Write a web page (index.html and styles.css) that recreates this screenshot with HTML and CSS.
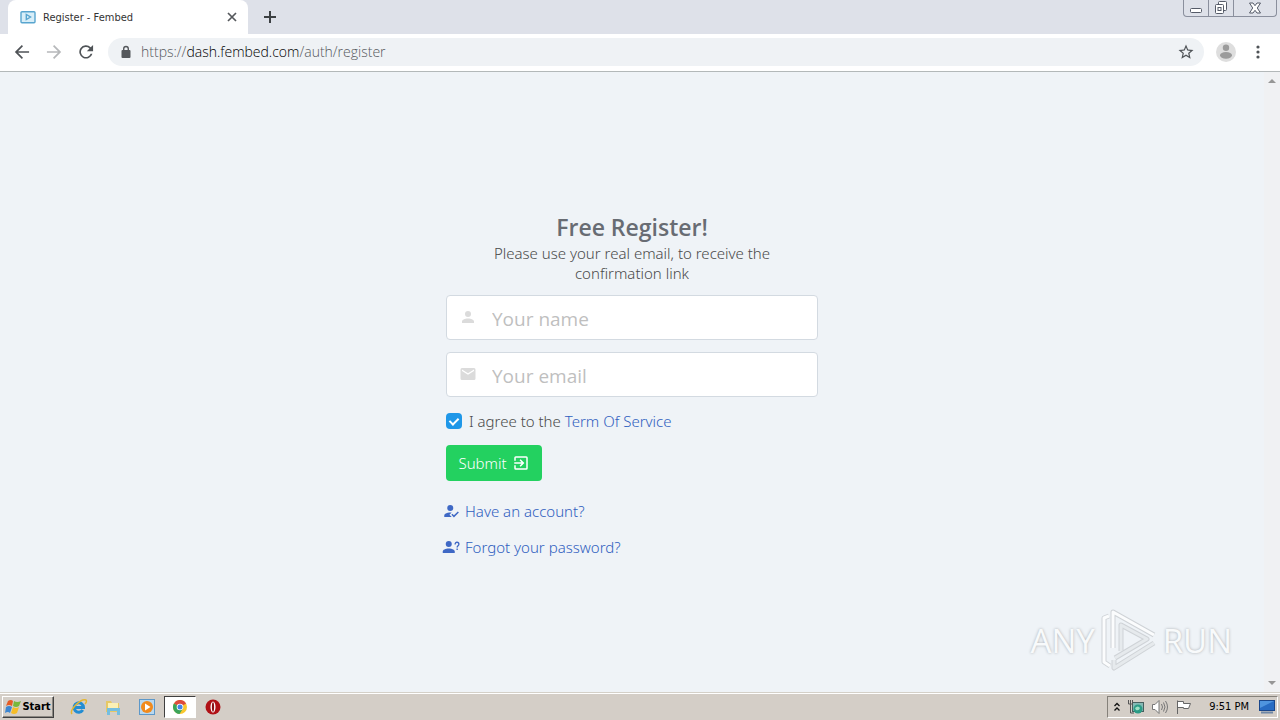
FILE: index.html
```html
<!DOCTYPE html>
<html lang="en">
<head>
    <meta charset="UTF-8">
    <meta name="viewport" content="width=device-width, initial-scale=1.0">
    <title>Register - Fembed</title>
    <link rel="stylesheet" href="styles.css">
</head>
<body>

    <header class="browser">
        <div class="tab-strip">
            <div class="tab">
                <svg class="favicon" width="16" height="16" viewBox="0 0 16 16" fill="#d8eef8" stroke="#58a5cf" stroke-width="1.4">
                    <rect x="1" y="2.7" width="14" height="11" rx="1"/>
                    <path d="M6.3 5.5v5L10.5 8z"/>
                </svg>
                <span class="tab-title">Register - Fembed</span>
                <button type="button" class="tab-close" aria-label="Close tab">
                    <svg width="10" height="10" viewBox="0 0 10 10" stroke="#55585c" stroke-width="1.7"><path d="M1 1l8 8M9 1l-8 8"/></svg>
                </button>
            </div>
            <button type="button" class="new-tab" aria-label="New tab">
                <svg width="12" height="12" viewBox="0 0 12 12" stroke="#3c4043" stroke-width="2"><path d="M6 0v12M0 6h12"/></svg>
            </button>
            <div class="window-buttons">
                <button type="button" class="win-min" aria-label="Minimize">
                    <svg width="14" height="14" viewBox="0 0 14 14" fill="#fff" stroke="#555b68"><rect x="1.5" y="7.5" width="11" height="4" rx="1"/></svg>
                </button>
                <button type="button" class="win-max" aria-label="Restore">
                    <svg width="14" height="14" viewBox="0 0 14 14" fill="#fff" stroke="#555b68"><rect x="4.500" y=".5" width="8" height="9" rx="1"/><rect x="1.500" y="3.500" width="8" height="9" rx="1"/><rect x="4" y="6.500" width="3" height="3"/></svg>
                </button>
                <button type="button" class="win-close" aria-label="Close">
                    <svg width="14" height="12" viewBox="0 0 14 12" fill="#fff" stroke="#555b68"><path d="M1.500 1h3.500l2 2.700L9 1h3.500L9.300 6l3.200 5H9L7 8.300 5 11H1.500l3.200-5z"/></svg>
                </button>
            </div>
        </div>
        <div class="toolbar">
            <button type="button" aria-label="Back"><svg width="20" height="20" viewBox="0 0 24 24" fill="#4f5357"><path d="M20.500 11H7.300l5.900-5.900L11.800 3.600 3.400 12l8.400 8.400 1.400-1.400L7.300 13h13.200z"/></svg></button>
            <button type="button" aria-label="Forward"><svg width="20" height="20" viewBox="0 0 24 24" fill="#b6b8ba"><path d="M3.500 11h13.200l-5.900-5.900 1.400-1.500 8.400 8.400-8.400 8.400-1.400-1.400 5.900-6H3.500z"/></svg></button>
            <button type="button" aria-label="Reload"><svg width="20" height="20" viewBox="0 0 24 24" fill="#4f5357"><path d="M17.700 6.300A8 8 0 1 0 19.700 14h-2.100A6 6 0 1 1 16.200 7.800L13 11h7.500V3.500z"/></svg></button>
            <div class="address">
                <svg width="20" height="16" viewBox="0 0 20 16" fill="#55585c"><rect x="5.500" y="6" width="9" height="8" rx="1"/><path d="M7.700 7V4.800a2.300 2.300 0 0 1 4.600 0V7" fill="none" stroke="#55585c" stroke-width="1.400"/></svg>
                <span class="url">https://<b>dash.fembed.com</b>/auth/register</span>
                <button type="button" class="star" aria-label="Bookmark"><svg width="18" height="18" viewBox="0 0 24 24" fill="#4f5357"><path d="M22 9.200l-7.200-.6L12 2 9.200 8.600 2 9.200l5.500 4.700L5.800 21l6.200-3.700 6.200 3.700-1.600-7.100zM12 15.400l-3.800 2.300 1-4.300-3.300-2.900 4.400-.4L12 6.100l1.700 4 4.400.4-3.300 2.900 1 4.300z"/></svg></button>
            </div>
            <button type="button" class="avatar" aria-label="Profile"><svg width="20" height="20" viewBox="0 0 20 20"><circle cx="10" cy="10" r="10" fill="#dedede"/><circle cx="10" cy="5.800" r="3.200" fill="#9b9b9b"/><ellipse cx="10" cy="13.300" rx="6" ry="3.400" fill="#9b9b9b"/></svg></button>
            <button type="button" class="menu" aria-label="Menu"><svg width="4" height="14" viewBox="0 0 4 14" fill="#4f5357"><circle cx="2" cy="2" r="1.600"/><circle cx="2" cy="7" r="1.600"/><circle cx="2" cy="12" r="1.600"/></svg></button>
        </div>
    </header>

    <div class="viewport">
        <main>
            <form class="register">
                <h1>Free Register!</h1>
                <p>Please use your real email, to receive the confirmation link</p>
                <div class="field">
                    <svg width="18" height="18" viewBox="0 0 24 24" fill="#dbdbdb"><path d="M12 4a4 4 0 1 1 0 8 4 4 0 0 1 0-8m0 10c4.400 0 8 1.800 8 4v2H4v-2c0-2.200 3.600-4 8-4z"/></svg>
                    <input type="text" placeholder="Your name" aria-label="Your name">
                </div>
                <div class="field">
                    <svg width="18" height="18" viewBox="0 0 24 24" fill="#dbdbdb"><path d="M20 8l-8 5-8-5V6l8 5 8-5m0-2H4a2 2 0 0 0-2 2v12a2 2 0 0 0 2 2h16a2 2 0 0 0 2-2V6a2 2 0 0 0-2-2z"/></svg>
                    <input type="email" placeholder="Your email" aria-label="Your email">
                </div>
                <div class="agree">
                    <input type="checkbox" id="agree" checked>
                    <label for="agree">I agree to the <a href="#">Term Of Service</a></label>
                </div>
                <button type="submit" class="submit">
                    <span>Submit</span>
                    <svg width="18" height="18" viewBox="0 0 24 24" fill="#fff"><path d="M19 3H5a2 2 0 0 0-2 2v4h2V5h14v14H5v-4H3v4a2 2 0 0 0 2 2h14a2 2 0 0 0 2-2V5a2 2 0 0 0-2-2m-8.900 12.600L11.500 17l5-5-5-5-1.400 1.400L12.700 11H3v2h9.700z"/></svg>
                </button>
                <a class="side-link" href="#">
                    <svg width="18" height="18" viewBox="0 0 24 24" fill="#3f68c5"><path d="M21.100 12.500l1.400 1.400-6.600 6.600-3.400-3.500 1.400-1.400 2 2zM11 4a4 4 0 1 1 0 8 4 4 0 0 1 0-8m0 10l1.900.1L10 17l3 3H3v-2c0-2.200 3.600-4 8-4z"/></svg>
                    Have an account?
                </a>
                <a class="side-link" href="#">
                    <svg width="18" height="18" viewBox="0 0 24 24" fill="#3f68c5"><circle cx="9" cy="8" r="4"/><path d="M1 20v-2c0-2.200 3.600-4 8-4s8 1.800 8 4v2z"/><path d="M17.500 8.500c0-4 5-3.500 5-.2 0 2-2.300 2-2.300 4.200M20.200 14v2" fill="none" stroke="#3f68c5" stroke-width="1.800"/></svg>
                    Forgot your password?
                </a>
            </form>
        </main>
        <div class="scrollbar"><i class="up"></i><i class="down"></i></div>

        <div class="watermark">
            <span>ANY</span>
            <svg width="58" height="64" viewBox="0 0 58 64" fill="none" stroke-width="4" stroke-linejoin="round">
                <path d="M9 8L4 10v44l6 4M13 40V4l41 23M54 35L14 60v-8M15 50l32-19-26-14v26" stroke="#cfd3d7" stroke-width="5"/>
                <path d="M9 8L4 10v44l6 4M13 40V4l41 23" stroke="#fbfcfd" stroke-width="3"/>
                <path d="M54 35L14 60v-8M15 50l32-19-26-14v26" stroke="#e6eaed" stroke-width="3"/>
            </svg>
            <span>RUN</span>
        </div>
    </div>

    <footer class="taskbar">
        <button type="button" class="start">
            <svg width="17" height="16" viewBox="0 0 17 16"><path d="M3 2q3-2 5 0L7 7Q4 5 1 7z" fill="#e65c25"/><path d="M9 2q3 2 7 0l-2 5q-3 2-6 0z" fill="#78b83b"/><path d="M1 8q3-2 6 0l-2 6q-2-2-5 0z" fill="#3d86d1"/><path d="M8 8q3 2 6 0l-2 6q-3 2-6 0z" fill="#f6bd27"/></svg>
            Start
        </button>
        <nav class="quick">
            <button type="button" aria-label="Internet Explorer">
                <svg width="18" height="18" viewBox="0 0 18 18" fill="none"><path d="M4.500 9.500h9A4.700 4.700 0 1 0 12.800 12" stroke="#238dd2" stroke-width="3"/><path d="M2 16C-1 12 11 0 16 2c1 1 0 3-1 4" stroke="#e5b62f" stroke-width="1.500"/></svg>
            </button>
            <button type="button" aria-label="Explorer">
                <svg width="18" height="18" viewBox="0 0 18 18"><path d="M2 3h5l1 2h7v9H2z" fill="#e6c866"/><path d="M4 5h10v5H4z" fill="#fbf0b5"/><path d="M3 10h13v7h-3v-4H6v4H3z" fill="#75bee0"/></svg>
            </button>
            <button type="button" aria-label="Media Player">
                <svg width="18" height="18" viewBox="0 0 18 18"><rect x="1.500" y="1.500" width="15" height="15" fill="#b9d8ef" stroke="#5d98c9"/><circle cx="9" cy="9" r="6" fill="#f18a1c"/><path d="M7 5.500v7L12.500 9z" fill="#fff"/></svg>
            </button>
            <button type="button" class="active" aria-label="Chrome">
                <svg width="14" height="14" viewBox="0 0 14 14"><circle cx="7" cy="7" r="7" fill="#f9c72e"/><path d="M7 7L.9 3.500A7 7 0 0 1 13.100 3.500z" fill="#dd4b3e"/><path d="M7 7L.9 3.500A7 7 0 0 0 6.500 14L10 8.500z" fill="#3ba45a"/><circle cx="7" cy="7" r="3.300" fill="#fff"/><circle cx="7" cy="7" r="2.500" fill="#4285e8"/></svg>
            </button>
            <button type="button" aria-label="Opera">
                <svg width="16" height="16" viewBox="0 0 16 16"><circle cx="8" cy="8" r="7.500" fill="#b01116"/><ellipse cx="8" cy="8" rx="2.500" ry="5.500" fill="#fff"/><ellipse cx="8" cy="8" rx="1.100" ry="4.800" fill="#8b0f14"/></svg>
            </button>
        </nav>
        <div class="tray">
            <svg width="8" height="10" viewBox="0 0 8 10" fill="none" stroke="#111" stroke-width="1.300"><path d="M1.500 4L4 1.500 6.500 4M1.500 8.500L4 6l2.500 2.500"/></svg>
            <svg width="18" height="16" viewBox="0 0 18 16"><rect x="5.500" y="3.500" width="11" height="9" fill="#84b9b5" stroke="#47605f"/><circle cx="11" cy="10" r="4.500" fill="#2c9c86"/><path d="M8 9q3-3 5 0-1 3-4 2z" fill="#9fe0c5"/><path d="M1.500 1v4h4V1M3.500 1v13H7" fill="none" stroke="#555"/></svg>
            <svg width="18" height="16" viewBox="0 0 18 16" fill="none" stroke="#777"><path d="M1.500 5.500H4l4-4v13l-4-4H1.500z" fill="#fff"/><path d="M10.500 5q2 3 0 6M12.500 3.500q3 4.500 0 9M14.500 2q4 6 0 12"/></svg>
            <svg width="18" height="16" viewBox="0 0 18 16" fill="#fff" stroke="#666"><path d="M2.500 15V1.500M2.500 2.500h6v2h7l-2 5h-5v-1h-6z"/></svg>
            <time>9:51 PM</time>
            <svg class="desktop" width="16" height="14" viewBox="0 0 16 14"><rect x=".5" y=".5" width="15" height="10" fill="#286cc3" stroke="#1a478b"/><path d="M1 1h14L1 8z" fill="#4f95df"/><path d="M2 12.500h12" stroke="#6f87a5" stroke-width="2"/></svg>
        </div>
    </footer>

</body>
</html>
```
FILE: styles.css
```css
* {
    box-sizing: border-box;
}

body {
    margin: 0;
    min-height: 100vh;
    display: flex;
    flex-direction: column;
    font-family: "Open Sans", "Noto Sans", sans-serif;
    font-weight: 300;
    background: #eff3f7;
    color: #4a4a4a;
}

button {
    border: 0;
    padding: 0;
    background: none;
    font: inherit;
    color: inherit;
    display: flex;
    align-items: center;
    justify-content: center;
}

a {
    color: #3060c0;
    text-decoration: none;
}

/* Browser window */
.tab-strip {
    display: flex;
    height: 34px;
    padding-left: 8px;
    background: #dee1e9;
}

.tab {
    display: flex;
    align-items: center;
    width: 240px;
    padding: 0 10px 0 12px;
    background: #fff;
    border-radius: 8px 8px 0 0;
}

.tab-title {
    flex: 1;
    margin-left: 7px;
    font: 11px "DejaVu Sans Condensed", "DejaVu Sans", sans-serif;
    color: #333;
}

.tab-close {
    width: 12px;
    height: 12px;
}

.new-tab {
    width: 44px;
}

.window-buttons {
    display: flex;
    height: 17px;
    margin: 0 3px 0 auto;
    border: 1px solid #8a8f9d;
    border-top: 0;
    border-radius: 0 0 4px 4px;
}

.window-buttons button {
    width: 25px;
    border-right: 1px solid #8a8f9d;
}

.window-buttons .win-close {
    width: 42px;
    border-right: 0;
}

.toolbar {
    display: flex;
    align-items: center;
    gap: 12px;
    height: 38px;
    padding: 0 12px 2px;
    background: #fff;
    border-bottom: 1px solid #b3b8b9;
}

.address {
    flex: 1;
    display: flex;
    align-items: center;
    height: 28px;
    padding: 0 9px 0 8px;
    border-radius: 14px;
    background: #eff2f5;
}

.url {
    flex: 1;
    margin-left: 5px;
    font-size: 14px;
    color: #55585c;
}

.url b {
    font-weight: 300;
    color: #000;
}

.menu {
    width: 20px;
}

/* Page */
.viewport {
    flex: 1;
    display: flex;
    position: relative;
}

main {
    flex: 1;
    display: flex;
    align-items: center;
    justify-content: center;
    padding-top: 13px;
}

.register {
    width: 100%;
    max-width: 372px;
    font-family: "Noto Sans", "Open Sans", sans-serif;
    font-size: 15px;
}

.register h1 {
    margin: 0;
    font-family: "Open Sans", "Noto Sans", sans-serif;
    font-size: 23px;
    line-height: 30px;
    font-weight: 600;
    text-align: center;
    color: #686c73;
}

.register p {
    margin: 1px 36px 12px;
    line-height: 20px;
    text-align: center;
}

.field {
    display: flex;
    align-items: center;
    height: 45px;
    margin-bottom: 12px;
    background: #fff;
    border: 1px solid #d3dae1;
    border-radius: 4px;
}

.field svg {
    margin: 0 15px 2px 12px;
}

.field input {
    flex: 1;
    min-width: 0;
    height: 40px;
    padding: 2px 0 0;
    border: 0;
    outline: 0;
    background: none;
    font: 19px "Open Sans", "Noto Sans", sans-serif;
}

.field input::placeholder {
    color: #bfbfbf;
}

.agree {
    display: flex;
    align-items: center;
    gap: 7px;
    height: 24px;
    margin-bottom: 12px;
}

.agree input {
    appearance: none;
    display: flex;
    justify-content: center;
    width: 16px;
    height: 16px;
    margin: 0;
    border-radius: 4px;
    background: #1f97e8;
}

.agree input:checked::before {
    content: "";
    width: 4px;
    height: 7px;
    margin-top: 3px;
    border: solid #fff;
    border-width: 0 2px 2px 0;
    transform: rotate(45deg);
}

.submit {
    gap: 5px;
    width: 96px;
    height: 36px;
    margin-bottom: 12px;
    border-radius: 4px;
    background: #23d160;
    color: #fff;
}

.side-link {
    display: flex;
    align-items: center;
    gap: 5px;
    height: 36px;
    margin-left: -4px;
}

.scrollbar {
    display: flex;
    flex-direction: column;
    justify-content: space-between;
    align-items: center;
    width: 16px;
    padding: 7px 0;
    background: #f0f1f3;
}

.scrollbar i {
    border: 4px solid transparent;
}

.scrollbar .up {
    border-top: 0;
    border-bottom: 4px solid #969696;
}

.scrollbar .down {
    border-bottom: 0;
    border-top: 4px solid #969696;
}

.watermark {
    position: absolute;
    right: 48px;
    bottom: 20px;
    display: flex;
    align-items: center;
    gap: 5px;
    font: 33px "Open Sans", "Noto Sans", sans-serif;
    color: #f8fafb;
    text-shadow: 0 0 3px #a9adb2;
}

/* Taskbar */
.taskbar {
    display: flex;
    align-items: center;
    height: 28px;
    padding: 0 2px;
    border-top: 1px solid #d4d0c8;
    box-shadow: inset 0 1px #fff;
    background: #d4cec7;
}

.start {
    width: 52px;
    height: 22px;
    border: 1px solid;
    border-color: #fff #404040 #404040 #fff;
    box-shadow: inset -1px -1px #8c8983;
    font: bold 11px "DejaVu Sans Condensed", "DejaVu Sans", sans-serif;
    color: #000;
}

.quick {
    display: flex;
    margin-left: 8px;
}

.quick button {
    width: 34px;
    height: 22px;
}

.quick .active {
    width: 32px;
    background: #fff;
    border: 1px solid;
    border-color: #404040 #fff #fff #404040;
}

.tray {
    display: flex;
    align-items: center;
    gap: 6px;
    height: 22px;
    margin-left: auto;
    padding: 0 2px 0 5px;
    border: 1px solid;
    border-color: #85817a #fff #fff #85817a;
}

.tray time {
    margin: 0 4px 0 10px;
    font: 11px "DejaVu Sans Condensed", "DejaVu Sans", sans-serif;
    color: #000;
}
```
